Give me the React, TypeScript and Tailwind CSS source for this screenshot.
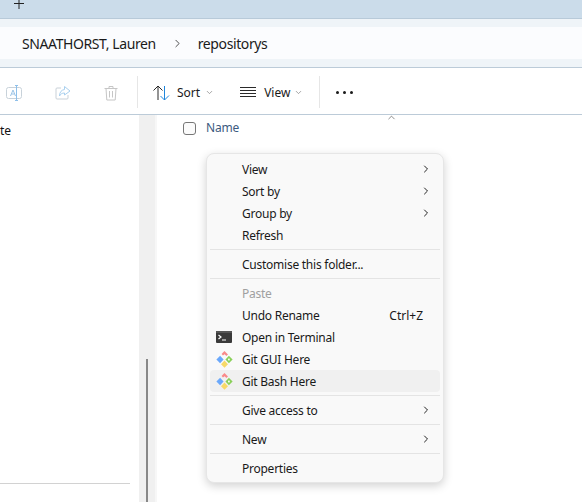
import React from 'react';
import { ChevronDown, ChevronRight, ChevronUp } from 'lucide-react';

const GitIcon = () => (
  <svg width="17" height="17" viewBox="0 0 17 17">
    <path d="M7.2 1.2 L8.5 0 L12 3.5 L10.4 5.1 L8.6 3.3 L7 4.6 L5.6 3 Z" fill="#f98a8a" />
    <path d="M4.1 4.8 L7.6 8.5 L4.1 12.2 L0.4 8.5 Z" fill="#6aa8fb" />
    <path d="M12.9 4.8 L16.6 8.5 L12.9 12.2 L9.4 8.5 Z" fill="#8ad05a" />
    <rect x="12" y="7.6" width="1.8" height="1.8" fill="#f4fbef" />
    <path d="M8.5 9.6 L12 13.2 L8.5 16.8 L5 13.2 Z" fill="#f7d968" />
  </svg>
);

const TerminalIcon = () => (
  <svg width="16" height="12" viewBox="0 0 16 12">
    <rect width="16" height="12" rx="1" fill="#3a3a3a" />
    <rect width="16" height="2" fill="#555555" />
    <path d="M2.5 4 L5 6 L2.5 8" fill="none" stroke="#ffffff" strokeWidth="1.2" />
    <path d="M6 9 H10" stroke="#ffffff" strokeWidth="1" />
  </svg>
);

const Row = ({ label, right, chevron, icon, muted, active }: {
  label: string; right?: string; chevron?: boolean; icon?: React.ReactNode; muted?: boolean; active?: boolean;
}) => (
  <div className={`h-[22px] flex items-center rounded-[4px] ${active ? 'bg-[#f0f0f0]' : ''}`}>
    <div className="w-[32px] flex justify-center pr-[4px] shrink-0">{icon}</div>
    <span className={`flex-1 pt-px tracking-[-0.25px] ${muted ? 'text-[#a0a0a0]' : 'text-[#1a1a1a]'}`}>{label}</span>
    {right && <span className="pt-px text-[#1a1a1a] mr-[17px]">{right}</span>}
    {chevron && <ChevronRight size={12} strokeWidth={2} className="mr-[8px] text-[#222222]" />}
  </div>
);

const Sep = () => <div className="h-px bg-[#e4e4e4] my-[3px]" />;

export default function App() {
  return (
    <div className="relative w-[582px] h-[502px] bg-white overflow-hidden text-[12px] font-['Noto_Sans','Open_Sans',sans-serif]">
      <div className="h-[19px] bg-[#cbdcea] border-b border-[#b8cad9] pl-[14px]">
        <svg width="10" height="9" viewBox="0 0 10 9" stroke="#222222" strokeWidth="1">
          <path d="M5 0 V9 M0 3.5 H10" />
        </svg>
      </div>

      <div className="h-[49px] bg-[#eff4f8] border-b border-[#bccbd8] py-[8px]">
        <div className="h-[32px] bg-[#fbfcfe] flex items-center text-[14px] tracking-[-0.4px] text-[#1a1a1a]">
          <span className="ml-[22px]">SNAATHORST, Lauren</span>
          <ChevronRight size={13} strokeWidth={1.4} className="ml-[15px]" />
          <span className="ml-[14px]">repositorys</span>
        </div>
      </div>

      <div className="h-[47px] border-b border-[#bccbd8] flex items-center pl-[6px] pt-[3px] text-[#1a1a1a]">
        <svg width="16" height="16" viewBox="0 0 16 16" fill="none">
          <rect x="0.5" y="2.5" width="15" height="11" rx="2" stroke="#c8d2da" />
          <path d="M4.5 11 L7 5 L9.5 11 M5.5 9 H8.5" stroke="#9cc4e6" />
          <path d="M10.5 0.5 V15.5 M9 0.5 H12 M9 15.5 H12" stroke="#8fc0ea" />
        </svg>
        <svg width="16" height="16" viewBox="0 0 16 16" className="ml-[33px]" fill="none">
          <path d="M6 3 H2 Q1 3 1 4 V13 Q1 14 2 14 H12 Q13 14 13 13 V10" stroke="#c9d1d8" />
          <path d="M9.5 1.5 L15 6 L9.5 10 V8 C7 8 5.5 9 4.5 11 C4.5 7 6.5 5 9.5 4.5 Z" stroke="#a9d0ef" />
        </svg>
        <svg width="16" height="16" viewBox="0 0 16 16" className="ml-[32px]" fill="none" stroke="#c6c6c6">
          <path d="M1.5 3.5 H14.5 M6 3.5 V1.5 H10 V3.5 M3 3.5 L3.8 15 H12.2 L13 3.5 M6.5 6 V12.5 M9.5 6 V12.5" />
        </svg>
        <div className="w-px h-[32px] bg-[#e6e6e6] ml-[18px] -mt-[2px]" />
        <svg width="17" height="16" viewBox="0 0 17 16" className="ml-[15px]" fill="none" strokeWidth="1">
          <path d="M5 15 V1 M0.5 5.5 L5 1 L9.5 5.5" stroke="#2a2a2a" />
          <path d="M11.5 1 V15 M7.5 11 L11.5 15 L16 10.5" stroke="#1f86dc" />
        </svg>
        <span className="ml-[7px]">Sort</span>
        <ChevronDown size={9} className="ml-[5px] text-[#888888]" />
        <svg width="16" height="11" viewBox="0 0 16 11" className="ml-[26px]" stroke="#2a2a2a" strokeWidth="1">
          <path d="M0 0.5 H16 M0 3.5 H16 M0 6.5 H16 M0 9.5 H16" />
        </svg>
        <span className="ml-[8px]">View</span>
        <ChevronDown size={9} className="ml-[4px] text-[#888888]" />
        <div className="w-px h-[32px] bg-[#e6e6e6] ml-[16px] -mt-[2px]" />
        <div className="ml-[16px] flex gap-[4px]">
          <div className="w-[3px] h-[3px] bg-[#1a1a1a] rounded-full" />
          <div className="w-[3px] h-[3px] bg-[#1a1a1a] rounded-full" />
          <div className="w-[3px] h-[3px] bg-[#1a1a1a] rounded-full" />
        </div>
      </div>

      <div className="flex h-[387px]">
        <div className="w-[139px] shrink-0 flex flex-col justify-between">
          <div className="mt-[7px] text-[#111111]">te</div>
          <div className="w-[130px] h-px bg-[#d2d2d2] mb-[18px]" />
        </div>
        <div className="w-[16px] shrink-0 bg-[#f0f0f0] flex flex-col items-center justify-end">
          <div className="w-[2px] h-[143px] bg-[#888888]" />
        </div>
        <div className="flex-1 border-l-2 border-[#f7f7f7] pl-[26px]">
          <div className="flex items-center h-[26px]">
            <div className="w-[13px] h-[13px] border border-[#777777] rounded-[3px] bg-[#fbfbfb]" />
            <span className="ml-[10px] tracking-[-0.2px] text-[#3d5a80]">Name</span>
          </div>
        </div>
      </div>

      <ChevronUp size={11} strokeWidth={1.2} className="absolute left-[386px] top-[112px] text-[#333333]" />

      <div className="absolute left-[206px] top-[153px] w-[238px] h-[330px] rounded-[8px] bg-[#f9f9f9] border border-[#e6e6e6] shadow-[0_3px_10px_rgba(0,0,0,0.18)] pt-[4px] px-[3px]">
        <Row label="View" chevron />
        <Row label="Sort by" chevron />
        <Row label="Group by" chevron />
        <Row label="Refresh" />
        <Sep />
        <Row label="Customise this folder..." />
        <Sep />
        <Row label="Paste" muted />
        <Row label="Undo Rename" right="Ctrl+Z" />
        <Row label="Open in Terminal" icon={<TerminalIcon />} />
        <Row label="Git GUI Here" icon={<GitIcon />} />
        <Row label="Git Bash Here" icon={<GitIcon />} active />
        <Sep />
        <Row label="Give access to" chevron />
        <Sep />
        <Row label="New" chevron />
        <Sep />
        <Row label="Properties" />
      </div>
    </div>
  );
}
